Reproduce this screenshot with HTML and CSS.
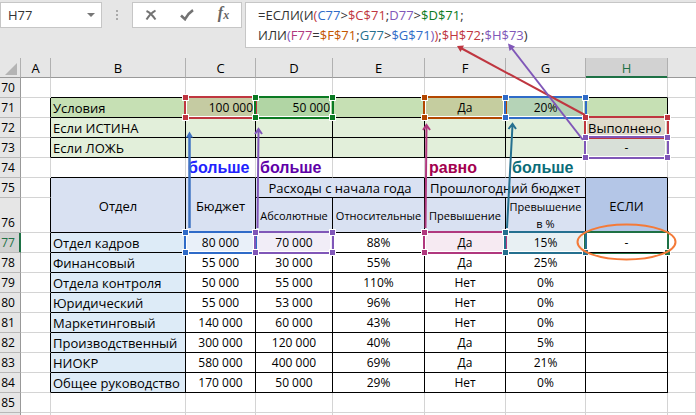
FILE: index.html
```html
<!DOCTYPE html>
<html lang="ru">
<head>
<meta charset="utf-8">
<title>H77</title>
<link rel="stylesheet" href="styles.css">
</head>
<body>
<main class="app">
  <header class="toolbar">
    <div class="namebox">
      <input class="namebox-input" type="text" value="H77" aria-label="Имя ячейки">
      <button class="namebox-toggle" type="button" aria-label="Список имён"><svg width="8" height="4" viewBox="0 0 8 4"><path d="M0 0h8L4 4z" fill="#777"/></svg></button>
    </div>
    <span class="grip"><i></i><i></i><i></i></span>
    <div class="actions">
      <button type="button" aria-label="Отмена"><svg width="12" height="12" viewBox="0 0 12 12"><path d="M1.500 2C4 3 8 7 10.500 10.500M10.500 1.500C7 3.500 3.500 7 1.500 10.500" fill="none" stroke="#737373" stroke-width="2"/></svg></button>
      <button type="button" aria-label="Ввод"><svg width="14" height="12" viewBox="0 0 14 12"><path d="M1 6.500L5 10.200C7 6.500 9.500 3.500 13 1.200" fill="none" stroke="#737373" stroke-width="2.600"/></svg></button>
      <button type="button" class="fx" aria-label="Вставить функцию">f<sub>x</sub></button>
    </div>
    <div class="formula" role="textbox" aria-label="Строка формул" aria-multiline="true">
      <div>=ЕСЛИ(И<span class="t-red">(</span><span class="t-blue">C77</span>&gt;<span class="t-red">$C$71</span>;<span class="t-purple">D77</span>&gt;<span class="t-green">$D$71</span>;</div>
      <div>ИЛИ<span class="t-purple">(</span><span class="t-pink">F77</span>=<span class="t-orange">$F$71</span>;<span class="t-teal">G77</span>&gt;<span class="t-blue">$G$71</span><span class="t-purple">)</span><span class="t-red">)</span>;<span class="t-red">$H$72</span>;<span class="t-purple">$H$73</span>)</div>
    </div>
  </header>

  <table class="sheet">
    <colgroup><col class="w-num"><col class="w-a"><col class="w-b"><col class="w-c"><col class="w-d"><col class="w-e"><col class="w-f"><col class="w-g"><col class="w-h"><col></colgroup>
    <thead>
      <tr><th class="corner"><svg width="12" height="12" viewBox="0 0 12 12"><path d="M12 0v12H0z" fill="#b4b4b4"/></svg></th><th>A</th><th>B</th><th>C</th><th>D</th><th>E</th><th>F</th><th>G</th><th class="active">H</th><th class="last"></th></tr>
    </thead>
    <tbody>
      <tr class="edge"><th>70</th><td class="plain"></td><td></td><td></td><td></td><td></td><td></td><td></td><td></td><td class="plain"></td></tr>
      <tr class="box cond"><th>71</th><td class="side"></td><td class="txt">Условия</td><td class="num tint-red">100 000</td><td class="num tint-green">50 000</td><td></td><td class="tint-orange">Да</td><td class="tint-blue">20%</td><td></td><td class="plain"></td></tr>
      <tr class="box opt"><th>72</th><td class="side"></td><td class="txt">Если ИСТИНА</td><td></td><td></td><td></td><td></td><td></td><td class="txt tint-rose">Выполнено</td><td class="plain"></td></tr>
      <tr class="box opt"><th>73</th><td class="side"></td><td class="txt">Если ЛОЖЬ</td><td></td><td></td><td></td><td></td><td></td><td class="tint-gray">-</td><td class="plain"></td></tr>
      <tr class="edge notes"><th>74</th><td class="plain"></td><td></td><td class="n-blue">больше</td><td class="n-purple">больше</td><td></td><td class="n-pink">равно</td><td class="n-teal">больше</td><td></td><td class="plain"></td></tr>
      <tr class="box head"><th>75</th><td class="side"></td><td rowspan="2">Отдел</td><td rowspan="2">Бюджет</td><td colspan="2">Расходы с начала года</td><td colspan="2">Прошлогодний бюджет</td><td rowspan="2" class="result">ЕСЛИ</td><td class="plain"></td></tr>
      <tr class="box head tall"><th>76</th><td class="side"></td><td class="small">Абсолютные</td><td class="small">Относительные</td><td class="small">Превышение</td><td class="small">Превышение<br>в %</td><td class="plain"></td></tr>
      <tr class="box"><th class="active">77</th><td class="side"></td><td class="dept">Отдел кадров</td><td class="pale-blue">80 000</td><td class="pale-purple">70 000</td><td>88%</td><td class="pale-pink">Да</td><td class="pale-teal">15%</td><td>-</td><td class="plain"></td></tr>
      <tr class="box"><th>78</th><td class="side"></td><td class="dept">Финансовый</td><td>55 000</td><td>30 000</td><td>55%</td><td>Да</td><td>25%</td><td></td><td class="plain"></td></tr>
      <tr class="box"><th>79</th><td class="side"></td><td class="dept">Отдела контроля</td><td>50 000</td><td>55 000</td><td>110%</td><td>Нет</td><td>0%</td><td></td><td class="plain"></td></tr>
      <tr class="box"><th>80</th><td class="side"></td><td class="dept">Юридический</td><td>55 000</td><td>53 000</td><td>96%</td><td>Нет</td><td>0%</td><td></td><td class="plain"></td></tr>
      <tr class="box"><th>81</th><td class="side"></td><td class="dept">Маркетинговый</td><td>140 000</td><td>60 000</td><td>43%</td><td>Нет</td><td>0%</td><td></td><td class="plain"></td></tr>
      <tr class="box"><th>82</th><td class="side"></td><td class="dept">Производственный</td><td>300 000</td><td>120 000</td><td>40%</td><td>Да</td><td>5%</td><td></td><td class="plain"></td></tr>
      <tr class="box"><th>83</th><td class="side"></td><td class="dept">НИОКР</td><td>580 000</td><td>400 000</td><td>69%</td><td>Да</td><td>21%</td><td></td><td class="plain"></td></tr>
      <tr class="box"><th>84</th><td class="side"></td><td class="dept">Общее руководство</td><td>170 000</td><td>50 000</td><td>29%</td><td>Нет</td><td>0%</td><td></td><td class="plain"></td></tr>
      <tr><th>85</th><td></td><td></td><td></td><td></td><td></td><td></td><td></td><td></td><td></td></tr>
      <tr><th></th><td></td><td></td><td></td><td></td><td></td><td></td><td></td><td></td><td></td></tr>
    </tbody>
  </table>

  <svg class="overlay" width="696" height="415" viewBox="0 0 696 415" aria-hidden="true">
    <defs>
      <g id="h"><rect x="-3" y="-3" width="7" height="7" fill="#fff"/><rect x="-2" y="-2" width="5" height="5" fill="currentColor"/></g>
    </defs>
    <g fill="none" stroke="#fff">
      <path d="M186.500 98v18.500h67V98M256.500 98v18.500h74V98M425.500 98v18.500h78V98M506.500 98v18.500h77V98M586.500 118v17.500h79V118M586.500 138v18.500h79V138"/>
      <path d="M186.500 233v18.500h67V233M256.500 233v18.500h74V233M425.500 233v18.500h78V233M506.500 233v18.500h77V233"/>
    </g>
    <g fill="none" stroke-width="2">
      <path d="M185 97h71v21h-71z" stroke="#bf3640"/>
      <path d="M255 97h78v21h-78z" stroke="#0b7a23"/>
      <path d="M424 97h82v21h-82z" stroke="#b34700"/>
      <path d="M505 97h81v21h-81z" stroke="#2f6bc8"/>
      <path d="M585 117h83v21h-83z" stroke="#bf3640"/>
      <path d="M585 137h83v21h-83z" stroke="#8057b8"/>
      <path d="M585 232h83v21h-83z" stroke="#1e7145"/>
      <path d="M185 232h71v21h-71z" stroke="#2f6bc8"/>
      <path d="M255 232h78v21h-78z" stroke="#8057b8"/>
      <path d="M424 232h82v21h-82z" stroke="#b0387e"/>
      <path d="M505 232h81v21h-81z" stroke="#25708f"/>
    </g>
    <path d="M584 252.500h84" stroke="#000"/>
    <g color="#bf3640"><use href="#h" x="185" y="97"/><use href="#h" x="185" y="117"/></g>
    <g color="#0b7a23"><use href="#h" x="255" y="97"/><use href="#h" x="255" y="117"/><use href="#h" x="332" y="97"/><use href="#h" x="332" y="117"/></g>
    <g color="#b34700"><use href="#h" x="424" y="97"/><use href="#h" x="424" y="117"/></g>
    <g color="#2f6bc8"><use href="#h" x="505" y="97"/><use href="#h" x="505" y="117"/><use href="#h" x="585" y="97"/><use href="#h" x="185" y="232"/><use href="#h" x="185" y="252"/></g>
    <g color="#bf3640"><use href="#h" x="585" y="117"/><use href="#h" x="667" y="117"/></g>
    <g color="#8057b8"><use href="#h" x="585" y="137"/><use href="#h" x="667" y="137"/><use href="#h" x="585" y="157"/><use href="#h" x="667" y="157"/><use href="#h" x="255" y="232"/><use href="#h" x="255" y="252"/><use href="#h" x="332" y="232"/><use href="#h" x="332" y="252"/></g>
    <g color="#b0387e"><use href="#h" x="424" y="232"/><use href="#h" x="424" y="252"/></g>
    <g color="#25708f"><use href="#h" x="505" y="232"/><use href="#h" x="505" y="252"/><use href="#h" x="585" y="252"/></g>
    <g color="#1e7145"><use href="#h" x="667" y="252"/></g>
    <g fill="none" stroke-width="2">
      <path d="M585 115L459 47" stroke="#bf3640"/><path d="M457 46l7-0.500-3.500 6.500z" fill="#bf3640" stroke="none"/>
      <path d="M583 140L510 46" stroke="#8057b8"/><path d="M508 43.500l7 3-5.500 4.500z" fill="#8057b8" stroke="none"/>
      <path d="M189.500 228V134" stroke="#3f73c3" stroke-width="2.500"/><path d="M189.500 131.500l3.500 6h-7z" fill="#3f73c3"/>
      <path d="M257.500 228L258.500 130M255 134l3.500-5 3.500 5" stroke="#8057b8"/>
      <path d="M425.500 228L426.500 126M423 130l3.500-5 3.500 5" stroke="#b0387e"/>
      <path d="M507 228L512.500 125M508.500 129l4-5 3.500 5" stroke="#25708f"/>
      <ellipse cx="626.500" cy="242" rx="49" ry="17.500" stroke="#f47a38"/>
    </g>
  </svg>
</main>
</body>
</html>
```
FILE: styles.css
```css
* { box-sizing: border-box; }
body {
  margin: 0;
  background: #fff;
  color: #000;
  font-family: "Open Sans", "Noto Sans", sans-serif;
  font-size: 12px;
  line-height: 18px;
}
.app { position: relative; height: 100vh; overflow: hidden; }
button { border: 0; padding: 0; background: none; }

.toolbar {
  display: flex;
  align-items: flex-start;
  padding-top: 2px;
  height: 58px;
  background: #e6e6e6;
}
.namebox, .actions, .formula { border: 1px solid #c6c6c6; background: #fff; }
.namebox {
  display: flex;
  align-items: center;
  width: 102px;
  height: 26px;
  padding: 0 6px 0 7px;
}
.namebox-input {
  flex: 1;
  min-width: 0;
  border: 0;
  padding: 0;
  outline: 0;
  font: inherit;
  font-size: 13px;
  color: #333;
}
.namebox-toggle { display: flex; }
.grip { display: flex; flex-direction: column; gap: 2px; width: 30px; padding-top: 8px; align-items: center; }
.grip i { width: 2px; height: 2px; background: #aaa; }
.actions {
  display: flex;
  align-items: center;
  justify-content: space-around;
  width: 110px;
  height: 26px;
}
.actions button { display: flex; }
.fx { font: italic bold 16px/20px "Liberation Serif", serif; color: #666; }
.fx sub { font-size: 12px; line-height: 24px; vertical-align: baseline; }
.formula {
  flex: 1;
  height: 46px;
  margin-left: 3px;
  padding: 2px 12px;
  border-right: 0;
  font-size: 13px;
  line-height: 20px;
  color: #333;
  white-space: nowrap;
}
.t-red { color: #bf3640; }
.t-blue { color: #2f6bc8; }
.t-purple { color: #8057b8; }
.t-green { color: #0b7a23; }
.t-pink { color: #b0387e; }
.t-orange { color: #c45500; }
.t-teal { color: #25708f; }

.sheet { width: 100%; table-layout: fixed; border-collapse: separate; border-spacing: 0; }
.w-num { width: 21px; }
.w-a { width: 30px; }
.w-b { width: 135px; }
.w-c { width: 70px; }
.w-d { width: 77px; }
.w-e { width: 92px; }
.w-f { width: 81px; }
.w-g { width: 80px; }
.w-h { width: 82px; }
th, td {
  height: 20px;
  padding: 1px 0 0;
  border-right: 1px solid #d4d4d4;
  border-bottom: 1px solid #d4d4d4;
  text-align: center;
  white-space: nowrap;
}
th { background: #e6e6e6; font-weight: 400; }
thead th { border-right-color: #b0b0b0; border-bottom-color: #999; font-size: 13px; }
thead .last { border-right: 0; }
thead .active { background: #d2d2d2; color: #1e7145; border-bottom-color: #1e7145; box-shadow: inset 0 -1px #1e7145; }
.corner svg { display: block; margin: 2px 0 0 5px; }
tbody th { border-right-color: #999; border-bottom-color: #b8b8b8; padding-right: 4px; }
tbody th.active { background: #d2d2d2; color: #1e7145; border-right-color: #1e7145; box-shadow: inset -1px 0 #1e7145; }
.edge td, .box td { border-bottom-color: #000; }
.box td { border-right-color: #000; }
.sheet .plain { border-color: #d4d4d4; }
.sheet .side { border-bottom-color: #d4d4d4; }
.txt, .dept { padding-left: 2px; text-align: left; font-size: 13px; }
.num { padding-right: 2px; text-align: right; }
.dept { background: #ddebf7; }
.cond td { background: #c6e0b4; }
.opt td { background: #e2efda; }
.head td { background: #d9e1f2; font-size: 13px; }
.sheet .side, .sheet .plain { background: #fff; }
.head .result { background: #b4c6e7; }
.tall th { height: 35px; vertical-align: bottom; }
.tall .small { padding: 0; font-size: 11px; line-height: 17px; }

.cond .tint-red { background: #c5cba2; }
.cond .tint-green { background: #b1d5a4; }
.cond .tint-orange { background: #c5cd9f; }
.cond .tint-blue { background: #b5d3b7; }
.opt .tint-rose { background: #dfdacb; }
.opt .tint-gray { background: #d8e0d8; }
.pale-blue { background: #e9f0f9; }
.pale-purple { background: #f1edf7; }
.pale-pink { background: #f6eaf2; }
.pale-teal { background: #e8f0f3; }

.notes td { padding: 0 0 0 4px; font: bold 16px/19px "Liberation Sans", sans-serif; text-align: left; }
.notes .n-blue { color: #2121ff; padding-left: 2px; }
.notes .n-purple { color: #5f00a8; }
.notes .n-pink { color: #a3004f; }
.notes .n-teal { color: #0a6c78; padding-left: 6px; }
.overlay { position: absolute; left: 0; top: 0; pointer-events: none; }
```
